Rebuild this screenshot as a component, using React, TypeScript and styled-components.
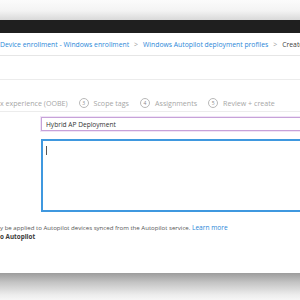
import React from "react";
import styled, { createGlobalStyle } from "styled-components";

const Global = createGlobalStyle`
  html, body { margin: 0; padding: 0; width: 300px; height: 300px; overflow: hidden; background: #fff; }
  body { font-family: "Open Sans", "Noto Sans", Arial, sans-serif; }
`;

const Page = styled.div`
  width: 300px;
  height: 300px;
  display: flex;
  flex-direction: column;
  overflow: hidden;
`;

const TopFade = styled.div`
  height: 20px;
  flex: none;
  background: linear-gradient(to bottom, #fbfbfb 0%, #f3f3f3 55%, #d9d9d9 100%);
`;

const Header = styled.div`
  height: 13px;
  flex: none;
  background: #1f1f1f;
`;

const Sheet = styled.div`
  flex: none;
  height: 240px;
  background: #fff;
  display: flex;
  flex-direction: column;
  overflow: hidden;
`;

const Breadcrumb = styled.div`
  height: 23px;
  flex: none;
  display: flex;
  align-items: center;
  gap: 5px;
  padding-top: 1px;
  box-sizing: border-box;
  border-bottom: 1px solid #e6e6e6;
  font-size: 6.8px;
  white-space: nowrap;
  overflow: hidden;
`;

const Crumb = styled.span<{ $current?: boolean }>`
  color: ${(p) => (p.$current ? "#404040" : "#2b88d8")};
`;

const Chevron = styled.span`
  color: #9a9a9a;
  font-size: 7px;
`;

const TitleArea = styled.div`
  height: 23px;
  flex: none;
  border-bottom: 1px solid #ececec;
`;

const Steps = styled.div`
  height: 32px;
  flex: none;
  display: flex;
  align-items: center;
  gap: 11px;
  box-sizing: border-box;
  padding-top: 17px;
  padding-bottom: 3px;
  border-bottom: 1px solid #ececec;
  font-size: 7.1px;
  color: #a6a6a6;
  white-space: nowrap;
`;

const Step = styled.div`
  display: flex;
  align-items: center;
  gap: 5px;
`;

const StepNum = styled.span`
  width: 8px;
  height: 8px;
  border-radius: 50%;
  border: 1px solid #b8b8b8;
  display: inline-flex;
  align-items: center;
  justify-content: center;
  font-size: 5px;
  color: #8a8a8a;
`;

const Form = styled.div`
  display: grid;
  grid-template-columns: 41px 270px;
  row-gap: 8px;
  padding-top: 5px;
`;

const Label = styled.div``;

const NameInput = styled.div`
  height: 14px;
  box-sizing: border-box;
  border: 1px solid #c7a2d9;
  box-shadow: 0 0 0 1px #f0e4f6;
  font-size: 6.6px;
  color: #333;
  display: flex;
  align-items: center;
  padding-left: 4px;
  white-space: nowrap;
`;

const TextArea = styled.div`
  height: 73px;
  box-sizing: border-box;
  border: 2px solid #3f98df;
  padding: 5px 0 0 3px;
`;

const Caret = styled.div`
  width: 1px;
  height: 9px;
  background: #555;
`;

const Note = styled.div`
  margin-top: 11px;
  font-size: 6.1px;
  line-height: 9px;
  color: #555;
  white-space: nowrap;
`;

const Link = styled.span`
  color: #2b88d8;
  font-size: 6.6px;
`;

const Strong = styled.div`
  font-weight: 700;
  font-size: 6.3px;
  color: #3a3a3a;
`;

const BottomFade = styled.div`
  flex: 1;
  background: linear-gradient(to bottom, #9c9c9c 0%, #c4c4c4 35%, #ececec 80%, #f6f6f6 100%);
`;

export default function App() {
  return (
    <Page>
      <Global />
      <TopFade />
      <Header />
      <Sheet>
        <Breadcrumb>
          <Crumb>Device enrollment - Windows enrollment</Crumb>
          <Chevron>&gt;</Chevron>
          <Crumb>Windows Autopilot deployment profiles</Crumb>
          <Chevron>&gt;</Chevron>
          <Crumb $current>Create p</Crumb>
        </Breadcrumb>
        <TitleArea />
        <Steps>
          <Step>x experience (OOBE)</Step>
          <Step>
            <StepNum>3</StepNum>Scope tags
          </Step>
          <Step>
            <StepNum>4</StepNum>Assignments
          </Step>
          <Step>
            <StepNum>5</StepNum>Review + create
          </Step>
        </Steps>
        <Form>
          <Label />
          <NameInput>Hybrid AP Deployment</NameInput>
          <Label />
          <TextArea>
            <Caret />
          </TextArea>
        </Form>
        <Note>
          y be applied to Autopilot devices synced from the Autopilot service. <Link>Learn more</Link>
          <Strong>o Autopilot</Strong>
        </Note>
      </Sheet>
      <BottomFade />
    </Page>
  );
}
